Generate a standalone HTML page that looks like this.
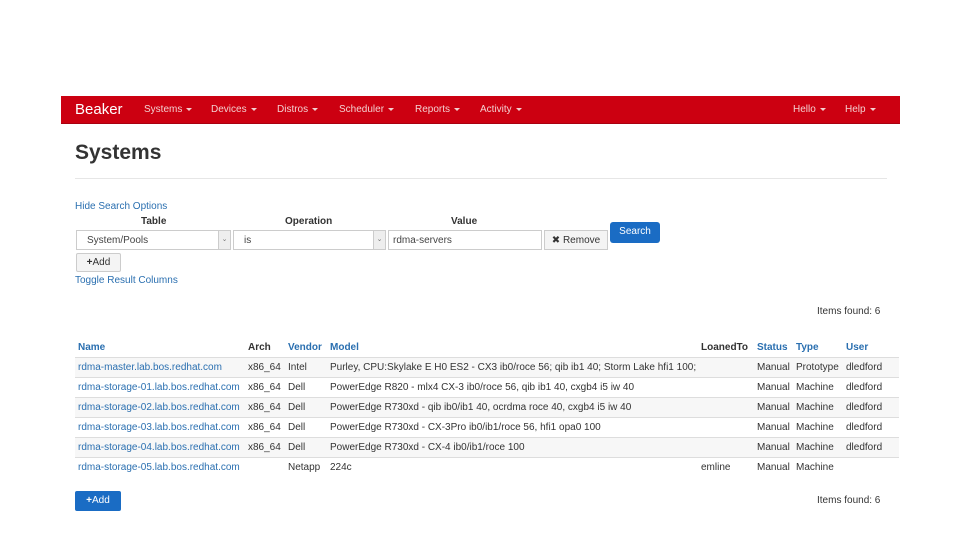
<!DOCTYPE html>
<html><head><meta charset="utf-8"><style>
*{margin:0;padding:0;box-sizing:border-box}
body{width:960px;height:540px;background:#fff;font-family:"Liberation Sans",sans-serif;position:relative;overflow:hidden;color:#333}
.a{position:absolute;white-space:nowrap}
#nav{left:61px;top:96px;width:839px;height:28px;background:#cc0011;border-bottom:1px solid #a80010}
.n{color:#f3d0d0;font-size:10px;top:104px}
.car{display:inline-block;border-left:3px solid transparent;border-right:3px solid transparent;border-top:3px solid #f3d0d0;vertical-align:middle;margin-left:4px}
.lk{color:#2a6fb0;font-size:10px}
.lbl{font-size:10px;font-weight:bold;top:216px}
.inp{top:230px;height:20px;border:1px solid #ccc;background:#fff;font-size:10px;padding:4px 0 0 10px;color:#444}
.sel{position:absolute;right:0;top:0;width:12px;height:18px;border-left:1px solid #ccc;background:#eee;font-size:7px;text-align:center;line-height:18px;color:#777}
.row{left:75px;width:824px;height:20px;border-top:1px solid #ddd}
.g{background:#f7f7f7}
.c{position:absolute;font-size:10px;white-space:nowrap}
.h{font-weight:bold;color:#2a6fb0}
</style></head><body>
<div id="nav" class="a"></div>
<div class="a" style="left:75px;top:101px;font-size:15px;color:#fff">Beaker</div>
<div class="a n" style="left:144px">Systems<span class="car"></span></div>
<div class="a n" style="left:211px">Devices<span class="car"></span></div>
<div class="a n" style="left:277px">Distros<span class="car"></span></div>
<div class="a n" style="left:339px">Scheduler<span class="car"></span></div>
<div class="a n" style="left:415px">Reports<span class="car"></span></div>
<div class="a n" style="left:480px">Activity<span class="car"></span></div>
<div class="a n" style="left:793px">Hello<span class="car"></span></div>
<div class="a n" style="left:845px">Help<span class="car"></span></div>

<div class="a" style="left:75px;top:141px;font-size:21px;font-weight:bold;color:#333">Systems</div>
<div class="a" style="left:75px;top:178px;width:812px;height:1px;background:#e6e6e6"></div>

<div class="a lk" style="left:75px;top:201px">Hide Search Options</div>
<div class="a lbl" style="left:141px">Table</div>
<div class="a lbl" style="left:285px">Operation</div>
<div class="a lbl" style="left:451px">Value</div>
<div class="a inp" style="left:76px;width:155px">System/Pools<div class="sel">⌄</div></div>
<div class="a inp" style="left:233px;width:153px">is<div class="sel">⌄</div></div>
<div class="a inp" style="left:388px;width:154px;padding-left:4px">rdma-servers</div>
<div class="a" style="left:544px;top:230px;width:64px;height:20px;border:1px solid #ccc;background:#f4f4f4;font-size:10px;padding-top:4px;text-align:center">✖ Remove</div>
<div class="a" style="left:610px;top:222px;width:50px;height:21px;border-radius:3px;background:#1a6cc4;color:#fff;font-size:10px;text-align:center;padding-top:4px">Search</div>
<div class="a" style="left:76px;top:253px;width:45px;height:19px;border:1px solid #ccc;background:#f4f4f4;font-size:10px;text-align:center;padding-top:3px;border-radius:2px"><b>+</b>Add</div>
<div class="a lk" style="left:75px;top:275px">Toggle Result Columns</div>
<div class="a" style="left:817px;top:306px;font-size:10px">Items found: 6</div>

<div class="c h" style="left:78px;top:342px">Name</div>
<div class="c" style="left:248px;top:342px;font-weight:bold">Arch</div>
<div class="c h" style="left:288px;top:342px">Vendor</div>
<div class="c h" style="left:330px;top:342px">Model</div>
<div class="c" style="left:701px;top:342px;font-weight:bold">LoanedTo</div>
<div class="c h" style="left:757px;top:342px">Status</div>
<div class="c h" style="left:796px;top:342px">Type</div>
<div class="c h" style="left:846px;top:342px">User</div>

<div class="a row g" style="top:357px"></div>
<div class="a row" style="top:377px"></div>
<div class="a row g" style="top:397px"></div>
<div class="a row" style="top:417px"></div>
<div class="a row g" style="top:437px"></div>
<div class="a row" style="top:457px"></div>

<div class="c lk" style="left:78px;top:362px">rdma-master.lab.bos.redhat.com</div>
<div class="c" style="left:248px;top:362px">x86_64</div><div class="c" style="left:288px;top:362px">Intel</div>
<div class="c" style="left:330px;top:362px">Purley, CPU:Skylake E H0 ES2 - CX3 ib0/roce 56; qib ib1 40; Storm Lake hfi1 100;</div>
<div class="c" style="left:757px;top:362px">Manual</div><div class="c" style="left:796px;top:362px">Prototype</div><div class="c" style="left:846px;top:362px">dledford</div>

<div class="c lk" style="left:78px;top:382px">rdma-storage-01.lab.bos.redhat.com</div>
<div class="c" style="left:248px;top:382px">x86_64</div><div class="c" style="left:288px;top:382px">Dell</div>
<div class="c" style="left:330px;top:382px">PowerEdge R820 - mlx4 CX-3 ib0/roce 56, qib ib1 40, cxgb4 i5 iw 40</div>
<div class="c" style="left:757px;top:382px">Manual</div><div class="c" style="left:796px;top:382px">Machine</div><div class="c" style="left:846px;top:382px">dledford</div>

<div class="c lk" style="left:78px;top:402px">rdma-storage-02.lab.bos.redhat.com</div>
<div class="c" style="left:248px;top:402px">x86_64</div><div class="c" style="left:288px;top:402px">Dell</div>
<div class="c" style="left:330px;top:402px">PowerEdge R730xd - qib ib0/ib1 40, ocrdma roce 40, cxgb4 i5 iw 40</div>
<div class="c" style="left:757px;top:402px">Manual</div><div class="c" style="left:796px;top:402px">Machine</div><div class="c" style="left:846px;top:402px">dledford</div>

<div class="c lk" style="left:78px;top:422px">rdma-storage-03.lab.bos.redhat.com</div>
<div class="c" style="left:248px;top:422px">x86_64</div><div class="c" style="left:288px;top:422px">Dell</div>
<div class="c" style="left:330px;top:422px">PowerEdge R730xd - CX-3Pro ib0/ib1/roce 56, hfi1 opa0 100</div>
<div class="c" style="left:757px;top:422px">Manual</div><div class="c" style="left:796px;top:422px">Machine</div><div class="c" style="left:846px;top:422px">dledford</div>

<div class="c lk" style="left:78px;top:442px">rdma-storage-04.lab.bos.redhat.com</div>
<div class="c" style="left:248px;top:442px">x86_64</div><div class="c" style="left:288px;top:442px">Dell</div>
<div class="c" style="left:330px;top:442px">PowerEdge R730xd - CX-4 ib0/ib1/roce 100</div>
<div class="c" style="left:757px;top:442px">Manual</div><div class="c" style="left:796px;top:442px">Machine</div><div class="c" style="left:846px;top:442px">dledford</div>

<div class="c lk" style="left:78px;top:462px">rdma-storage-05.lab.bos.redhat.com</div>
<div class="c" style="left:288px;top:462px">Netapp</div><div class="c" style="left:330px;top:462px">224c</div>
<div class="c" style="left:701px;top:462px">emline</div>
<div class="c" style="left:757px;top:462px">Manual</div><div class="c" style="left:796px;top:462px">Machine</div>

<div class="a" style="left:75px;top:491px;width:46px;height:20px;border-radius:2px;background:#1a6cc4;color:#fff;font-size:10px;text-align:center;padding-top:4px"><b>+</b>Add</div>
<div class="a" style="left:817px;top:495px;font-size:10px">Items found: 6</div>
</body></html>
